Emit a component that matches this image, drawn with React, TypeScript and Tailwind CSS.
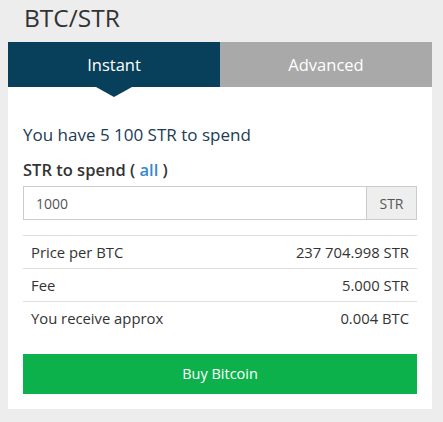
import React from "react";

export default function App() {
  const rows = [
    ["Price per BTC", "237 704.998 STR"],
    ["Fee", "5.000 STR"],
    ["You receive approx", "0.004 BTC"],
  ];
  return (
    <div className="w-[443px] h-[422px] bg-[#ededed] pt-[4px] pl-[8px] pr-[11px]" style={{ fontFamily: '"Open Sans", sans-serif' }}>
      <h1 className="text-[24.5px] leading-[28px] text-[#333333] pl-[16px] h-[38px]">BTC/STR</h1>
      <div className="bg-white">
        <div className="flex h-[45px]">
          <div className="relative flex-1 bg-[#083f5a] text-white text-[16.5px] flex items-center justify-center pt-[2px]">
            Instant
            <div className="absolute top-full left-1/2 -translate-x-1/2 w-0 h-0 border-x-[18px] border-x-transparent border-t-[10px] border-t-[#083f5a]" />
          </div>
          <div className="flex-1 bg-[#a9a9a9] text-white text-[16.5px] flex items-center justify-center pt-[2px]">Advanced</div>
        </div>
        <div className="px-[15px] pt-[36px] pb-[15px]">
          <p className="text-[17px] leading-[24px] text-[#213b55]">You have 5 100 STR to spend</p>
          <p className="mt-[11px] text-[16.5px] leading-[24px] font-semibold text-[#333333]">
            STR to spend ( <span className="text-[#3a86d0]">all</span> )
          </p>
          <div className="mt-[4px] flex h-[34px] border border-[#cccccc]">
            <div className="flex-1 flex items-center pl-[12px] text-[14px] text-[#555555]">1000</div>
            <div className="w-[50px] bg-[#eeeeee] border-l border-[#cccccc] flex items-center justify-center text-[14px] text-[#555555]">STR</div>
          </div>
          <div className="mt-[15px]">
            {rows.map(([l, r], i) => (
              <div key={i} className="flex justify-between items-center h-[33px] px-[8px] border-t border-[#dddddd] text-[14.8px] text-[#333333]">
                <span>{l}</span>
                <span>{r}</span>
              </div>
            ))}
          </div>
          <button className="mt-[20px] w-full h-[40px] bg-[#0db14b] text-white text-[14.5px]">Buy Bitcoin</button>
        </div>
      </div>
    </div>
  );
}
